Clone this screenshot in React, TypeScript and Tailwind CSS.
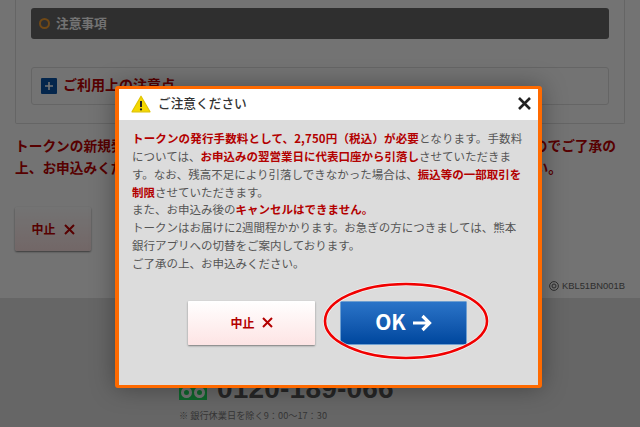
import React from "react";

const R = ({ children }: { children: React.ReactNode }) => (
  <b className="font-bold text-[#b30000]">{children}</b>
);

export default function App() {
  return (
    <div className="relative w-[640px] h-[427px] overflow-hidden bg-white text-[#333] font-['Noto_Sans_CJK_JP','Noto_Sans',sans-serif]">
      <div className="h-[298px] px-[15px] bg-white">
        <div className="h-[124px] border-x border-b border-[#e0e0e0] bg-white px-[15px] pt-[8px] rounded-b-[2px]">
          <div className="h-[31px] bg-[#686868] rounded-[3px] flex items-center pl-[8px] gap-[6px]">
            <span className="w-[11px] h-[11px] rounded-full border-2 border-[#f8a030]" />
            <span className="text-[#fff] text-[12.7px] font-bold pb-[2px]">注意事項</span>
          </div>
          <div className="mt-[28px] h-[38px] border border-[#e0e0e0] rounded-[3px] flex items-center pl-[9px] gap-[6px]">
            <span className="w-[16px] h-[16px] bg-[#0a56a8] flex items-center justify-center rounded-[1px]">
              <svg width="10" height="10" viewBox="0 0 10 10"><path d="M5 1v8M1 5h8" stroke="#fff" strokeWidth="1.6" /></svg>
            </span>
            <span className="text-[#c00000] text-[14px] font-bold pb-[3px]">ご利用上の注意点</span>
          </div>
        </div>
        <p className="mt-[10px] text-[#c00000] text-[13.7px] leading-[22px] font-bold whitespace-nowrap">
          トークンの新規発行には発行手数料がかかります。手続きに少々お時間がかかりますのでご了承の
          <br />
          上、お申込みください。手続きの内容につきましてはよくご確認の上でお進みください。
        </p>
        <div className="mt-[29px] w-[76px] h-[44px] rounded-[2px] bg-gradient-to-b from-white to-[#fde4e4] shadow-[0_1px_2px_rgba(0,0,0,0.5)] flex items-center justify-center gap-[8px] text-[#c00000] text-[12px] font-bold">
          中止
          <svg width="11" height="11" viewBox="0 0 11 11"><path d="M1 1l9 9M10 1l-9 9" stroke="#c00000" strokeWidth="2" /></svg>
        </div>
        <div className="mt-[28px] flex justify-end items-center gap-[3px] text-[9.4px] text-[#666] font-['Liberation_Sans',sans-serif]">
          <svg width="10" height="10" viewBox="0 0 10 10" fill="none" stroke="#666"><circle cx="5" cy="5" r="4.4" /><circle cx="5" cy="5" r="2" /></svg>
          KBL51BN001B
        </div>
      </div>
      <div className="h-[129px] bg-[#e3e3e3] pl-[179px] pt-[76px]">
        <div className="flex items-end gap-[10px] h-[29px]">
          <span className="w-[28px] h-[16px] mb-[3px] bg-[#1fe060] flex items-center justify-center gap-[2px]">
            <span className="w-[11px] h-[11px] rounded-full border-[3px] border-white" />
            <span className="w-[11px] h-[11px] rounded-full border-[3px] border-white" />
          </span>
          <span className="text-[#555] text-[28px] leading-[29px] font-bold font-['Liberation_Sans',sans-serif] tracking-[0.2px]">0120-189-066</span>
        </div>
        <div className="text-[9.2px] mt-[6px] text-[#777]">※ 銀行休業日を除く9：00～17：30</div>
      </div>

      <div className="absolute inset-0 bg-black/55" />

      <div className="absolute left-[115px] top-[86px] w-[427px] h-[302px] border-x-[4px] border-y-[3px] border-[#ff6a00] rounded-[3px] shadow-[0_0_24px_rgba(0,0,0,0.35)] bg-[#dcdcdc] flex flex-col">
        <div className="h-[31px] bg-white flex items-center pl-[12px] pr-[7px] shrink-0">
          <svg className="mb-[2px]" width="20" height="18" viewBox="0 0 20 18">
            <path d="M10 1.2L19 16.8H1z" fill="#f5d800" stroke="#e0c400" strokeWidth="1.2" strokeLinejoin="round" />
            <path d="M10 6v6" stroke="#222" strokeWidth="2" />
            <circle cx="10" cy="14.4" r="1.1" fill="#222" />
          </svg>
          <span className="ml-[7px] text-[12.7px] font-medium text-[#333] pb-[3px]">ご注意ください</span>
          <svg className="ml-auto mb-[3px]" width="13" height="13" viewBox="0 0 13 13"><path d="M1 1l11 11M12 1L1 12" stroke="#222" strokeWidth="2.6" /></svg>
        </div>
        <div className="pl-[13px] pt-[10px] text-[11.5px] leading-[17.85px] text-[#555] whitespace-nowrap">
          <span className="tracking-[0.15px]"><R>トークンの発行手数料として、2,750円（税込）が必要</R>となります。手数料</span><br />
          については、<R>お申込みの翌営業日に代表口座から引落し</R>させていただきま<br />
          す。なお、残高不足により引落しできなかった場合は、<R>振込等の一部取引を</R><br />
          <R>制限</R>させていただきます。<br />
          また、お申込み後の<R>キャンセルはできません。</R><br />
          トークンはお届けに2週間程かかります。お急ぎの方につきましては、熊本<br />
          銀行アプリへの切替をご案内しております。<br />
          ご了承の上、お申込みください。
        </div>
        <div className="mt-[28px] flex justify-center gap-[25px] pr-[2px]">
          <div className="w-[127px] h-[44px] rounded-[1px] bg-gradient-to-b from-white to-[#fde4e4] shadow-[0_1px_2px_rgba(0,0,0,0.45)] flex items-center justify-center gap-[7px] text-[#b30000] text-[12px] font-bold">
            中止
            <svg width="11" height="11" viewBox="0 0 11 11"><path d="M1 1l9 9M10 1l-9 9" stroke="#b30000" strokeWidth="2" /></svg>
          </div>
          <div className="w-[127px] h-[44px] rounded-[1px] bg-gradient-to-b from-[#2a74c8] to-[#00479e] border border-[#6f9fd0] flex items-center justify-center gap-[6px] text-white text-[21px] font-bold">
            <span className="pb-[2px]">OK</span>
            <svg width="20" height="18" viewBox="0 0 20 18" fill="none"><path d="M1 9h16M10.5 2L17.5 9 10.5 16" stroke="#fff" strokeWidth="3.2" /></svg>
          </div>
        </div>
      </div>

      <svg className="absolute left-[320px] top-[280px]" width="172" height="82" viewBox="0 0 172 82" fill="none">
        <ellipse cx="86" cy="41" rx="81" ry="37" stroke="#fff" strokeOpacity="0.7" strokeWidth="4" />
        <ellipse cx="86" cy="41" rx="81" ry="37" stroke="#f00000" strokeWidth="2.6" />
      </svg>
    </div>
  );
}
